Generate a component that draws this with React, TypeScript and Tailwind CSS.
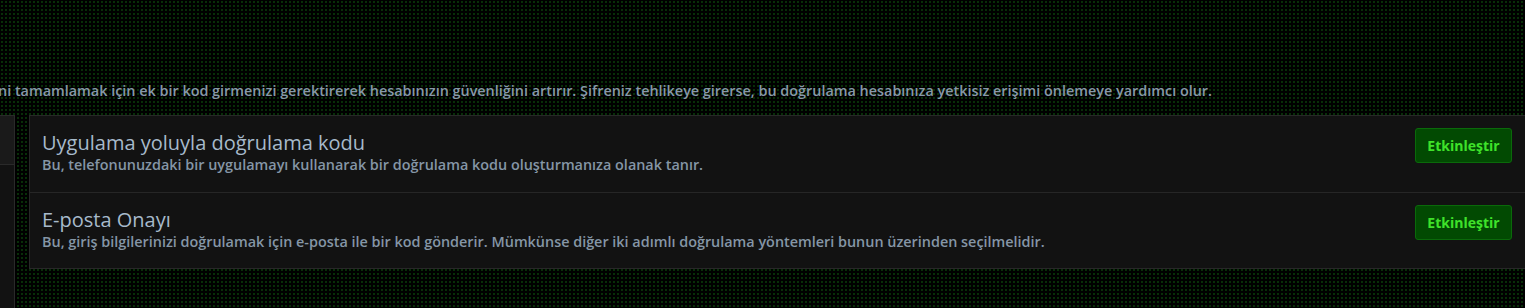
import React from "react";

const font = { fontFamily: "'Open Sans', Lato, sans-serif" };

function Row({
  title,
  sub,
  last,
}: {
  title: string;
  sub: string;
  last?: boolean;
}) {
  return (
    <div
      className={`flex items-start justify-between pl-[12px] pr-[13px] pt-[12px] ${
        last ? "h-[75px]" : "h-[77px] border-b border-[#262626]"
      }`}
    >
      <div className="flex flex-col pt-[2px]">
        <div className="text-[20px] font-medium leading-[25px] text-[#a7bacb]">{title}</div>
        <div className="text-[14.4px] font-semibold leading-[20px] text-[#8596a6]">{sub}</div>
      </div>
      <button className="h-[35px] w-[97px] rounded-[3px] border border-[#0a6a0a] bg-[#024a02] text-[14px] font-bold text-[#3fe22a]">
        Etkinleştir
      </button>
    </div>
  );
}

export default function App() {
  return (
    <div
      style={font}
      className="relative h-[308px] w-[1525px] overflow-hidden bg-black bg-[radial-gradient(#082f08_0.7px,transparent_1px)] bg-[size:4px_4px]"
    >
      <div className="pt-[81px]">
        <p className="-ml-[2px] whitespace-nowrap text-[14.4px] font-semibold leading-[20px] text-[#8898a8]">
          ni tamamlamak için ek bir kod girmenizi gerektirerek hesabınızın güvenliğini artırır. Şifreniz tehlikeye girerse, bu doğrulama hesabınıza yetkisiz erişimi önlemeye yardımcı olur.
        </p>
      </div>
      <div className="mt-[14px] flex gap-[14px]">
        <div className="flex h-[200px] w-[15px] flex-col border-r border-t border-[#2a2a2a] bg-[#121212]">
          <div className="h-[49px] border-b border-[#2a2a2a] bg-[#1a1a1a]" />
        </div>
        <div className="flex-1">
          <div className="-mr-[1px] border border-[#282828] bg-[#121212]">
            <Row
              title="Uygulama yoluyla doğrulama kodu"
              sub="Bu, telefonunuzdaki bir uygulamayı kullanarak bir doğrulama kodu oluşturmanıza olanak tanır."
            />
            <Row
              last
              title="E-posta Onayı"
              sub="Bu, giriş bilgilerinizi doğrulamak için e-posta ile bir kod gönderir. Mümkünse diğer iki adımlı doğrulama yöntemleri bunun üzerinden seçilmelidir."
            />
          </div>
        </div>
      </div>
    </div>
  );
}
